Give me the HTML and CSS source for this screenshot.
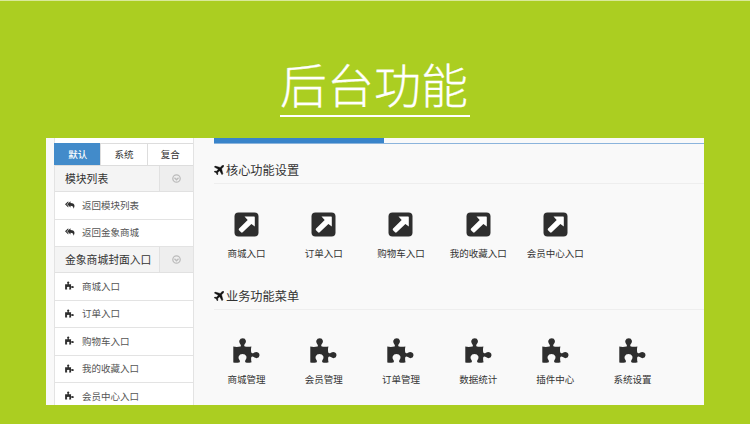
FILE: index.html
```html
<!DOCTYPE html>
<html lang="zh-CN">
<head>
<meta charset="utf-8">
<title>后台功能</title>
<link rel="stylesheet" href="styles.css">
</head>
<body>
<svg class="defs" aria-hidden="true">
  <symbol id="puzzle" viewBox="0 0 27 25"><path d="M.3 8.6Q4 9.3 7.5 8.5Q8.4 7.8 7.3 6.2Q5.8 4.5 6.4 2.5Q7.2 .2 9.8 .2Q12.3 .2 12.8 2.5Q13.3 4.5 11.8 6Q10.6 7.8 11.8 8.5Q15 9.2 18.4 8.5Q17.7 11.3 18.2 14.3Q19 16.1 20.9 14.8Q23 13.4 25 14.4Q26.6 15.3 26.5 17.3Q26.3 19.8 24.1 20.1Q22.4 20.3 20.9 19Q18.8 17.8 18.2 19.5Q17.9 22 18.6 24.2Q15.5 25.2 12.8 24.5Q11.5 23.8 12.5 22Q14 20.2 13.2 18.1Q12.2 16.1 9.5 16.1Q6.7 16.2 5.8 18.2Q5.1 20.2 6.3 21.8Q7.7 23.9 6 24.5Q3.3 25 .3 24.5Z"/></symbol>
  <symbol id="launch" viewBox="0 0 25 25"><rect x=".5" y=".5" width="24" height="24" rx="4"/><path fill="#fff" d="M10.5 4.5H20.2Q20.8 4.5 20.8 5.2V14.6L17.4 11.9L8.7 20.3Q7.8 21 7 20.2L5 18.2Q4.3 17.3 5.1 16.5L13.7 8Z"/></symbol>
  <symbol id="plane" viewBox="0 0 10 10"><path stroke="#111" stroke-width=".4" d="M9.7.3Q9.2-.1 8.2.5L6.2 2.4L1.2 1.1L.3 2L4.3 4.3L2.5 6.3L.8 6.1L.1 6.8L2.2 7.8L3.2 9.9L3.9 9.2L3.7 7.5L5.7 5.7L8 9.7L8.9 8.8L7.6 3.8L9.5 1.8Q10 .8 9.7.3Z"/></symbol>
  <symbol id="reply" viewBox="0 0 10 8"><path d="M3.3.2V1.7L1.5 3.3L3.3 5V6.5L0 3.3ZM5.5.2V2Q9.5 2.2 9.5 5Q9.4 6.8 8.3 7.7Q8.8 4.8 5.5 4.7V6.5L2.2 3.3Z"/></symbol>
  <symbol id="chevron" viewBox="0 0 8 8"><circle cx="4" cy="4" r="3.3" fill="none" stroke="currentColor" stroke-width="1.1"/><path d="M2.2 3.4L4 5.1L5.8 3.4" fill="none" stroke="currentColor" stroke-width="1.2"/></symbol>
</svg>
<h1 class="title">后台功能</h1>
<div class="panel">
  <aside class="side">
    <div class="tabs"><span class="on">默认</span><span>系统</span><span>复合</span></div>
    <div class="group"><b>模块列表</b><i><svg><use href="#chevron"/></svg></i></div>
    <div class="link"><svg class="back"><use href="#reply"/></svg>返回模块列表</div>
    <div class="link"><svg class="back"><use href="#reply"/></svg>返回金象商城</div>
    <div class="group"><b>金象商城封面入口</b><i><svg><use href="#chevron"/></svg></i></div>
    <div class="link"><svg><use href="#puzzle"/></svg>商城入口</div>
    <div class="link"><svg><use href="#puzzle"/></svg>订单入口</div>
    <div class="link"><svg><use href="#puzzle"/></svg>购物车入口</div>
    <div class="link"><svg><use href="#puzzle"/></svg>我的收藏入口</div>
    <div class="link"><svg><use href="#puzzle"/></svg>会员中心入口</div>
  </aside>
  <main class="main">
    <div class="bar"><span></span></div>
    <h2><svg><use href="#plane"/></svg>核心功能设置</h2>
    <div class="tiles">
      <div><svg class="box"><use href="#launch"/></svg>商城入口</div>
      <div><svg class="box"><use href="#launch"/></svg>订单入口</div>
      <div><svg class="box"><use href="#launch"/></svg>购物车入口</div>
      <div><svg class="box"><use href="#launch"/></svg>我的收藏入口</div>
      <div><svg class="box"><use href="#launch"/></svg>会员中心入口</div>
    </div>
    <h2><svg><use href="#plane"/></svg>业务功能菜单</h2>
    <div class="tiles">
      <div><svg><use href="#puzzle"/></svg>商城管理</div>
      <div><svg><use href="#puzzle"/></svg>会员管理</div>
      <div><svg><use href="#puzzle"/></svg>订单管理</div>
      <div><svg><use href="#puzzle"/></svg>数据统计</div>
      <div><svg><use href="#puzzle"/></svg>插件中心</div>
      <div><svg><use href="#puzzle"/></svg>系统设置</div>
    </div>
  </main>
</div>
</body>
</html>
```
FILE: styles.css
```css
* { box-sizing: border-box; }
body {
  margin: 0;
  height: 424px;
  overflow: hidden;
  background: #abce21;
  border-top: 1px solid #d9e99a;
  font-family: "Noto Sans CJK SC", sans-serif;
  color: #333;
}
svg { display: block; flex: none; fill: #2e2e2e; }
.defs { display: none; }
.title {
  width: 190px;
  height: 59px;
  margin: 57px 0 0 280px;
  border-bottom: 2px solid #fff;
  color: #fff;
  font-size: 47px;
  font-weight: 300;
  line-height: 49px;
  white-space: nowrap;
  -webkit-text-stroke: .3px #fff;
}
.panel {
  display: flex;
  width: 658px;
  height: 267px;
  margin: 21px 0 0 46px;
  padding-left: 8px;
  background: #f9f9f9;
  overflow: hidden;
}
.side {
  width: 140px;
  height: 275px;
  flex: none;
  border: solid #e3e3e3;
  border-width: 0 1px;
  background: #fff;
  font-size: 9.5px;
}
.tabs {
  display: flex;
  height: 28px;
  padding-top: 5px;
  border-bottom: 1px solid #ddd;
}
.tabs span {
  flex: 1;
  border: solid #ddd;
  border-width: 1px 0 0 1px;
  line-height: 21px;
  text-align: center;
}
.tabs .on { margin-left: -1px; background: #428bca; border-color: #428bca; color: #fff; font-weight: 500; }
.group {
  display: flex;
  height: 26px;
  border-bottom: 1px solid #e1e1e1;
  background: #f4f4f4;
}
.group b {
  flex: 1;
  padding-left: 10px;
  font-size: 10.8px;
  font-weight: 400;
  line-height: 24px;
  white-space: nowrap;
}
.group i {
  display: flex;
  width: 34px;
  align-items: center;
  justify-content: center;
  border-left: 1px solid #e1e1e1;
  background: #eee;
  color: #bbb;
}
.group svg { width: 9px; height: 9px; }
.link {
  display: flex;
  height: 27.5px;
  padding: 0 0 1px 10px;
  align-items: center;
  border-bottom: 1px solid #e3e3e3;
  color: #555;
}
.link svg { width: 9px; height: 9px; margin-right: 8px; }
.link .back { width: 10px; height: 8px; margin-right: 7px; }
.main { flex: 1; padding-left: 20px; }
.bar { height: 6px; border-bottom: 1px solid #8bb4dc; }
.bar span { display: block; width: 170px; height: 5px; background: #3984ca; }
h2 {
  display: flex;
  height: 40px;
  margin: 0;
  padding-top: 12px;
  align-items: center;
  border-bottom: 1px solid #eee;
  font-size: 12.2px;
  font-weight: 400;
}
h2 svg { width: 10px; height: 10px; margin-right: 2px; fill: #111; }
.tiles {
  display: flex;
  height: 86px;
  padding-top: 28px;
  margin-left: -6px;
}
.tiles div {
  width: 77.2px;
  flex: none;
  font-size: 9.5px;
  line-height: 14px;
  text-align: center;
}
.tiles svg { width: 27px; height: 25px; margin: 0 auto 9px; }
.tiles .box { width: 25px; }
```
